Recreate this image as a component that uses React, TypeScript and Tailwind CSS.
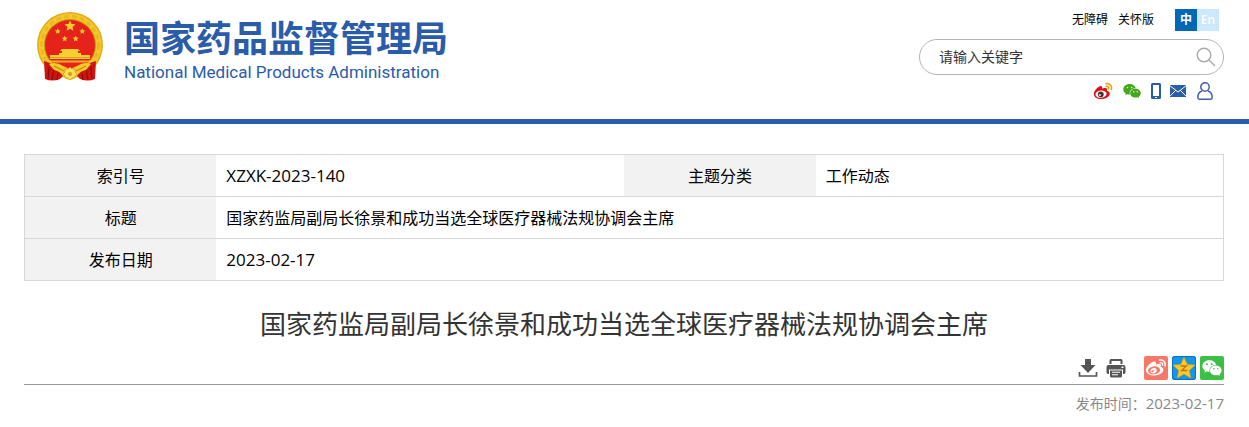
import { FaWeibo } from "react-icons/fa";
import { AiFillWechat } from "react-icons/ai";

interface Field {
  label: string;
  value: string;
  latin?: boolean;
}

const title = "国家药监局副局长徐景和成功当选全球医疗器械法规协调会主席";
const published = "2023-02-17";

const rows: Field[][] = [
  [
    { label: "索引号", value: "XZXK-2023-140", latin: true },
    { label: "主题分类", value: "工作动态" },
  ],
  [{ label: "标题", value: title }],
  [{ label: "发布日期", value: published, latin: true }],
];

const STAR =
  "M0 -10 L2.9 -3.6 L9.8 -3 L4.6 1.7 L6.1 8.5 L0 5 L-6.1 8.5 L-4.6 1.7 L-9.8 -3 L-2.9 -3.6Z";

function Emblem() {
  return (
    <svg viewBox="0 0 68 72" className="h-[72px] w-[68px]" aria-hidden="true">
      <circle cx="34" cy="34" r="33" fill="#e3ab12" />
      <circle cx="34" cy="34" r="31.5" fill="#f3c92c" />
      <circle cx="34" cy="34" r="28.5" fill="none" stroke="#e9b822" strokeWidth="3" strokeDasharray="5 3" />
      <circle cx="34" cy="34" r="26" fill="#d18f0a" />
      <circle cx="34" cy="34" r="25" fill="#e5231b" />
      <g fill="#f6d02f">
        <path d={STAR} transform="translate(34 15) scale(.56)" />
        <path d={STAR} transform="translate(21.7 20.3) scale(.3)" />
        <path d={STAR} transform="translate(46.3 20.3) scale(.3)" />
        <path d={STAR} transform="translate(28.7 27.7) scale(.3)" />
        <path d={STAR} transform="translate(39.7 27.7) scale(.3)" />
        <path d="M26 38 H42 L44 40 H42 V42 H45 V44 H54 V48 H14 V44 H23 V42 H26 V40 H24Z" />
        <path d="M11 49.5 H57 V51.5 H11Z" opacity=".8" />
      </g>
      <path d="M14 46.5 H54" stroke="#d99a10" strokeWidth=".8" />
      <path d="M8 50 Q16 52 22 58 L28 64 L24 68 Q16 71 9 68Z" fill="#cf1512" />
      <path d="M60 50 Q52 52 46 58 L40 64 L44 68 Q52 71 59 68Z" fill="#cf1512" />
      <path
        d="M13 56 L12 68 M18 58 L16 69 M22 62 L21 69 M55 56 L56 68 M50 58 L52 69 M46 62 L47 69"
        stroke="#8e0b0b"
        strokeWidth="1.2"
      />
      <path
        d="M13 53 Q20 50 27 55 L34 58 L41 55 Q48 50 55 53 L50 59 Q44 60 41 65 Q34 73 27 65 Q24 60 18 59Z"
        fill="#f3c92c"
      />
      <path d="M18 55 L28 60 M50 55 L40 60" stroke="#c98a06" strokeWidth="1.2" />
      <path
        d="M34 56 l2 2 3 0 0 3 2 2 -2 2 0 2 -3 0 -2 2 -2 -2 -3 0 0 -2 -2 -2 2 -2 0 -3 3 0Z"
        fill="#f9df5c"
        stroke="#c98a06"
        strokeWidth=".6"
      />
      <circle cx="34" cy="63" r="2" fill="#d99a08" />
    </svg>
  );
}

function WeiboIcon() {
  return (
    <svg viewBox="0 0 20 18" className="h-[18px] w-5" aria-hidden="true">
      <path
        d="M8 4 C9 4 9.5 5 9 6.5 C11 5.7 13.5 5.5 14 7 C14.2 7.8 14 8.2 13.8 8.8 C15.5 9.3 17 10 16.8 12 C16.4 15 12 17 8 17 C4 17 .8 15 .8 12 C.8 9 5 4.3 8 4Z"
        fill="#e00d14"
      />
      <ellipse cx="8" cy="12.2" rx="5.6" ry="3.6" fill="#fff" transform="rotate(-6 8 12)" />
      <circle cx="7.8" cy="12.3" r="2.9" fill="#4a3030" />
      <circle cx="6.9" cy="13" r="1.1" fill="#ddd" />
      <path
        d="M13 1.8 C16.8 1 19.4 4 18.3 7.4 M13.2 4.4 C15 4 16.2 5.2 15.7 6.8"
        fill="none"
        stroke="#f0a30a"
        strokeWidth="1.6"
        strokeLinecap="round"
      />
    </svg>
  );
}

function PhoneIcon() {
  return (
    <svg viewBox="0 0 10 16" className="h-4 w-[10px]" aria-hidden="true">
      <path
        fillRule="evenodd"
        d="M1.5 0 H8.5 Q10 0 10 1.5 V14.5 Q10 16 8.5 16 H1.5 Q0 16 0 14.5 V1.5 Q0 0 1.5 0Z M2 2 V13 H8 V2Z M4 14 V15 H6 V14Z"
        fill="#2a5caa"
      />
    </svg>
  );
}

function MailIcon() {
  return (
    <svg viewBox="0 0 16 12" className="h-3 w-4" aria-hidden="true">
      <path d="M0 0 H16 V12 H0Z" fill="#2a5caa" />
      <path
        d="M0 .8 L8 7 L16 .8 M0 11.2 L5.6 5.4 M16 11.2 L10.4 5.4"
        fill="none"
        stroke="#fff"
        strokeWidth="1"
      />
    </svg>
  );
}

function UserIcon() {
  return (
    <svg viewBox="0 0 16 18" className="h-[18px] w-4" fill="none" stroke="#3f5fae" strokeWidth="1.5" aria-hidden="true">
      <circle cx="8" cy="5" r="4.2" />
      <path d="M5 9 C2 10 .8 13 .8 15.6 Q.8 17.2 2.4 17.2 H13.6 Q15.2 17.2 15.2 15.6 C15.2 13 14 10 11 9" />
    </svg>
  );
}

function DownloadIcon() {
  return (
    <svg viewBox="0 0 20 20" className="size-5" aria-hidden="true">
      <path d="M7 1 H13 V7 H17.5 L10 15 L2.5 7 H7Z" fill="#555" />
      <path d="M1.5 14 V18 H18.5 V14" fill="none" stroke="#555" strokeWidth="1.7" />
    </svg>
  );
}

function PrintIcon() {
  return (
    <svg viewBox="0 0 20 20" className="size-5" aria-hidden="true">
      <path d="M3.5 6 V2.5 Q3.5 1 5 1 H15 Q16.5 1 16.5 2.5 V6 H14.5 V3 H5.5 V6Z" fill="#555" />
      <path
        fillRule="evenodd"
        d="M2.5 7 H17.5 Q19.5 7 19.5 9 V14 Q19.5 16 18 16 H17 V11.5 H3 V16 H2 Q.5 16 .5 14 V9 Q.5 7 2.5 7Z M15.5 8.5 V10 H17.5 V8.5Z"
        fill="#555"
      />
      <path
        fillRule="evenodd"
        d="M4 12.5 H16 V18 Q16 19.5 14.5 19.5 H5.5 Q4 19.5 4 18Z M6 13.7 V14.7 H14 V13.7Z M6 16.3 V17.3 H12 V16.3Z"
        fill="#555"
      />
    </svg>
  );
}

function QzoneIcon() {
  return (
    <svg viewBox="0 0 24 24" className="size-6" aria-hidden="true">
      <path
        d={STAR}
        transform="translate(12 12.5) scale(1.12)"
        fill="#fdca26"
        stroke="#e8a012"
        strokeWidth=".6"
        strokeLinejoin="round"
      />
      <path d="M8.5 10 H14.5 L9.5 14.5 H15.5" fill="none" stroke="#c9701a" strokeWidth="1.3" />
    </svg>
  );
}

export default function App() {
  return (
    <div className="min-h-screen bg-white font-['Open_Sans','Noto_Sans_CJK_SC',sans-serif] text-black">
      <header className="border-b-[5px] border-[#2a5caa]">
        <div className="flex h-[119px] justify-between pr-[25px] pl-6">
          <a href="#" className="flex items-start gap-5 pt-[11px] pl-3">
            <Emblem />
            <span className="flex flex-col pt-[7px] text-[#2a5caa]">
              <span className="text-4xl leading-[42px] font-bold">国家药品监督管理局</span>
              <span className="font-['Roboto',sans-serif] text-[17px] leading-6">
                National Medical Products Administration
              </span>
            </span>
          </a>

          <div className="flex w-[305px] flex-col">
            <div className="flex h-[39px] items-center justify-end gap-[10px] pr-[5px] text-xs">
              <a href="#">无障碍</a>
              <a href="#">关怀版</a>
              <div className="ml-[11px] flex text-center leading-[22px] font-semibold text-white">
                <a href="#" className="w-[22px] bg-[#0068b7]">中</a>
                <a href="#" className="w-[22px] bg-[#cce8ff]">En</a>
              </div>
            </div>

            <form className="flex h-9 items-center rounded-full border border-[#b5b5b5] pr-[7px] pl-[19px]">
              <input
                type="text"
                aria-label="请输入关键字"
                placeholder="请输入关键字"
                className="min-w-0 flex-1 text-sm outline-none placeholder:text-[#333]"
              />
              <button type="button" aria-label="搜索">
                <svg viewBox="0 0 20 20" className="size-5" fill="none" stroke="#aaa" strokeWidth="1.4">
                  <circle cx="8" cy="8" r="6.8" />
                  <path d="M13 13 L19 19" />
                </svg>
              </button>
            </form>

            <div className="flex h-8 items-center justify-end gap-[9px] pr-[11px]">
              <a href="#" aria-label="微博"><WeiboIcon /></a>
              <a href="#" aria-label="微信"><AiFillWechat className="size-5 text-[#43a81b]" /></a>
              <a href="#" aria-label="手机版"><PhoneIcon /></a>
              <a href="#" aria-label="邮箱"><MailIcon /></a>
              <a href="#" aria-label="个人中心" className="ml-[2px]"><UserIcon /></a>
            </div>
          </div>
        </div>
      </header>

      <main className="pt-[30px] pr-[25px] pl-6">
        <table className="w-full table-fixed border-collapse border border-[#d7d7d7] text-base">
          <colgroup>
            <col className="w-[16%]" />
            <col className="w-[34%]" />
            <col className="w-[16%]" />
            <col className="w-[34%]" />
          </colgroup>
          <tbody>
            {rows.map((row) => (
              <tr key={row[0].label} className="h-[42px] border-b border-[#d7d7d7]">
                {row.map((field) => [
                  <th key={field.label} scope="row" className="bg-[#f2f2f2] text-center font-normal">
                    {field.label}
                  </th>,
                  <td
                    key={field.value}
                    colSpan={row.length === 1 ? 3 : 1}
                    className={field.latin ? "px-[10px] text-[17px]" : "px-[10px]"}
                  >
                    {field.value}
                  </td>,
                ])}
              </tr>
            ))}
          </tbody>
        </table>

        <h1 className="mt-[23px] text-center text-[26px] leading-10 text-[#333]">{title}</h1>

        <div className="mt-3 flex items-center justify-end border-b border-[#999] pb-1">
          <button type="button" aria-label="下载" className="mr-2"><DownloadIcon /></button>
          <button type="button" aria-label="打印" className="mr-[18px]"><PrintIcon /></button>
          <div className="flex gap-1 text-white">
            <a href="#" aria-label="分享到微博" className="flex size-6 items-center justify-center rounded-xs bg-[#f67869]">
              <FaWeibo className="size-5" />
            </a>
            <a href="#" aria-label="分享到QQ空间" className="rounded-xs border border-[#0b6fc4] bg-[#1296e8]">
              <span className="-m-px block"><QzoneIcon /></span>
            </a>
            <a href="#" aria-label="分享到微信" className="flex size-6 items-center justify-center rounded-xs bg-[#3bbf45]">
              <AiFillWechat className="size-[22px]" />
            </a>
          </div>
        </div>

        <p className="pt-[6px] text-right text-sm leading-6 text-[#888]">
          发布时间：<span className="text-[15px]">{published}</span>
        </p>
      </main>
    </div>
  );
}
